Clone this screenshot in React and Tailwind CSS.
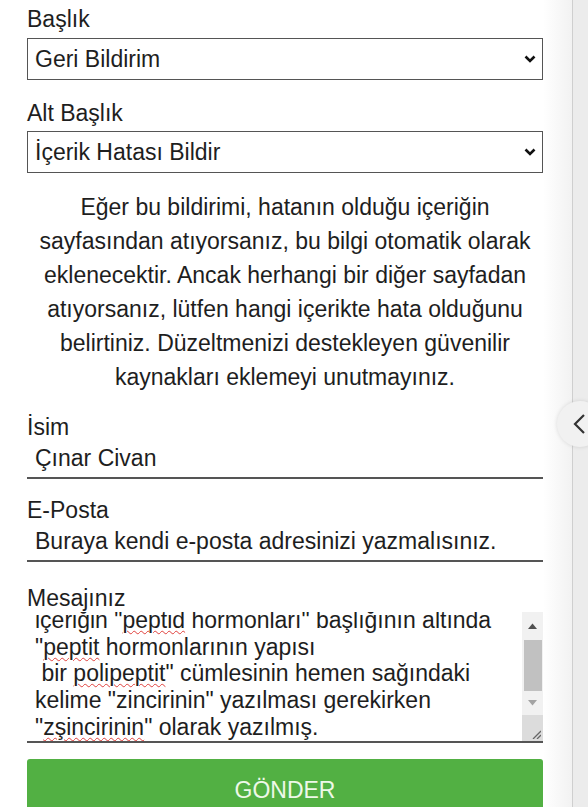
import React from "react";

const Label = ({ children }) => (
  <label className="block text-[23px] leading-[24px] text-[#1e1e1e]">{children}</label>
);

const Chevron = () => (
  <svg
    className="pointer-events-none absolute right-[7px] top-1/2 -translate-y-1/2"
    width="12"
    height="9"
    viewBox="0 0 12 9"
    fill="none"
  >
    <path d="M1.5 2 L6 6.5 L10.5 2" stroke="#111" strokeWidth="2.6" />
  </svg>
);

const Select = ({ value }) => (
  <div className="relative">
    <select
      defaultValue={value}
      className="block h-[42px] w-full appearance-none border-[1.5px] border-[#555] bg-white pl-[7px] text-[23px] text-[#1e1e1e] outline-none"
    >
      <option>{value}</option>
    </select>
    <Chevron />
  </div>
);

const Line = ({ value, placeholder }) => (
  <input
    type="text"
    defaultValue={value}
    placeholder={placeholder}
    className="block h-[40px] w-full border-b-2 border-[#555] bg-white pl-[8px] text-[23px] text-[#1e1e1e] outline-none placeholder:text-[#1e1e1e]"
  />
);

// spellcheck squiggle
const Typo = ({ children }) => (
  <span className="underline decoration-wavy decoration-[#e0403c] decoration-[1px] underline-offset-[2px]">
    {children}
  </span>
);

const notice = [
  "Eğer bu bildirimi, hatanın olduğu içeriğin",
  "sayfasından atıyorsanız, bu bilgi otomatik olarak",
  "eklenecektir. Ancak herhangi bir diğer sayfadan",
  "atıyorsanız, lütfen hangi içerikte hata olduğunu",
  "belirtiniz. Düzeltmenizi destekleyen güvenilir",
  "kaynakları eklemeyi unutmayınız.",
];

const App = () => {
  return (
    <div
      className="flex h-[807px] w-[588px] overflow-hidden bg-white"
      style={{ fontFamily: '"Liberation Sans", Arial, sans-serif' }}
    >
      <div className="w-[543px] shrink-0 pl-[27px] pt-[7px]">
        <Label>Başlık</Label>
        <div className="mt-[7px]">
          <Select value="Geri Bildirim" />
        </div>

        <div className="mt-[21px]">
          <Label>Alt Başlık</Label>
        </div>
        <div className="mt-[6px]">
          <Select value="İçerik Hatası Bildir" />
        </div>

        <div className="mt-[17px] text-center text-[23px] leading-[34px] whitespace-nowrap text-[#1e1e1e]">
          {notice.map((l) => (
            <p key={l}>{l}</p>
          ))}
        </div>

        <div className="mt-[21px]">
          <Label>İsim</Label>
        </div>
        <Line value="Çınar Civan" />

        <div className="mt-[19px]">
          <Label>E-Posta</Label>
        </div>
        <Line placeholder="Buraya kendi e-posta adresinizi yazmalısınız." />

        <div className="mt-[21px] h-[29px] overflow-hidden pt-[3px]">
          <Label>Mesajınız</Label>
        </div>

        <div className="flex h-[131px] border-b-2 border-[#555] bg-white">
          <div className="flex-1 overflow-hidden whitespace-nowrap pl-[8px] text-[23px] leading-[26.7px] text-[#1e1e1e]">
            <div className="-mt-[5px]">
              <div>
                içeriğin "<Typo>peptid</Typo> hormonları" başlığının altında
              </div>
              <div>
                "<Typo>peptit</Typo> hormonlarının yapısı
              </div>
              <div>
                &nbsp;bir <Typo>polipeptit</Typo>" cümlesinin hemen sağındaki
              </div>
              <div>kelime "zincirinin" yazılması gerekirken</div>
              <div>
                "<Typo>zşincirinin</Typo>" olarak yazılmış.
              </div>
            </div>
          </div>
          <div className="flex w-[21px] flex-col bg-[#f1f1f1]">
            <div className="flex h-[28px] items-center justify-center">
              <svg width="9" height="6" viewBox="0 0 9 6">
                <path d="M0 6 L4.5 0.5 L9 6 Z" fill="#505050" />
              </svg>
            </div>
            <div className="mx-auto h-[51px] w-[18px] bg-[#c1c1c1]" />
            <div className="flex h-[24px] items-center justify-center">
              <svg width="9" height="6" viewBox="0 0 9 6">
                <path d="M0 0 L4.5 5.5 L9 0 Z" fill="#a3a3a3" />
              </svg>
            </div>
            <div className="flex flex-1 items-end justify-end bg-[#dcdcdc] pb-[2px] pr-[2px]">
              <svg width="10" height="10" viewBox="0 0 10 10">
                <path d="M2 10 L10 2 M6 10 L10 6" stroke="#666" strokeWidth="1.3" />
              </svg>
            </div>
          </div>
        </div>

        <button className="mt-[16px] flex h-[60px] w-full justify-center rounded-[3px] bg-[#52b043] pt-[18px] text-[23px] leading-[26px] text-[#eef8e8]">
          GÖNDER
        </button>
      </div>

      <div className="relative flex flex-1">
        <div className="flex-1 bg-gradient-to-r from-white to-[#f2f2f2]" />
        <div className="w-px bg-[#cfcfcf]" />
        <div className="w-[15px] bg-[#ececec]" />
        <div className="absolute left-[14px] top-[401px] flex h-[46px] w-[46px] items-center rounded-full bg-[#f1f1f1] pl-[16px] shadow-[0_0_4px_rgba(0,0,0,0.12)]">
          <svg width="12" height="20" viewBox="0 0 12 20" fill="none">
            <path d="M11 1 L2 10 L11 19" stroke="#333" strokeWidth="2.2" />
          </svg>
        </div>
      </div>
    </div>
  );
};

export default App;
